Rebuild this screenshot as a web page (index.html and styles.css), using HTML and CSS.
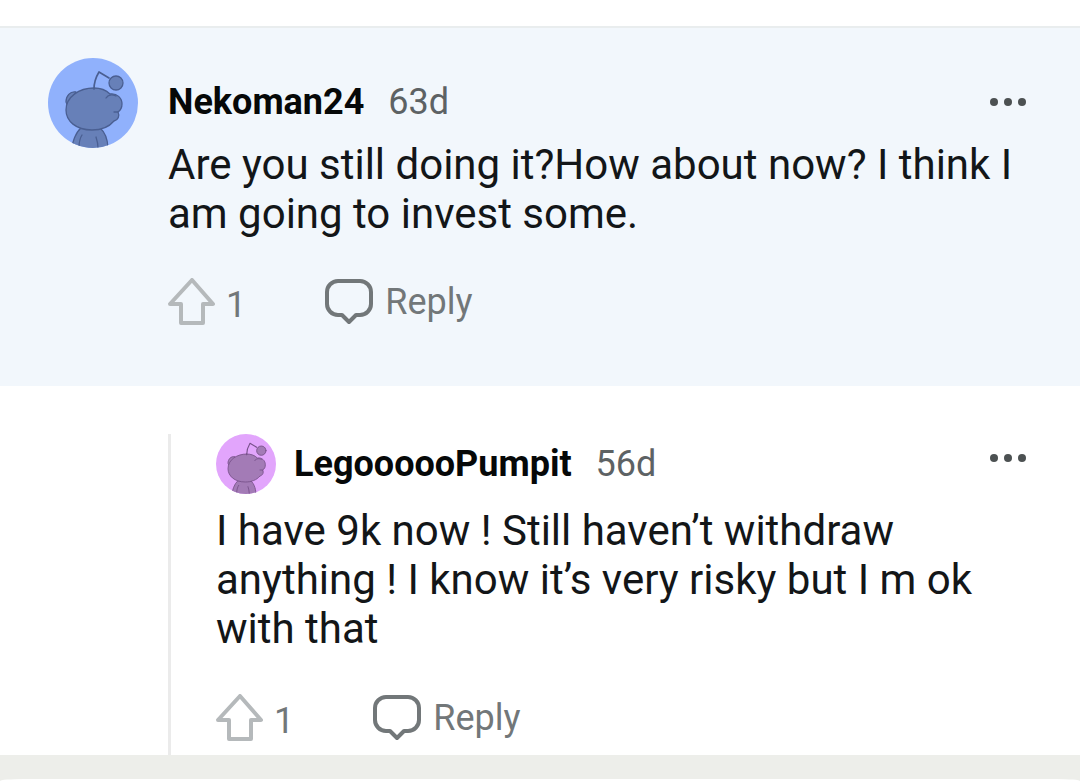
FILE: index.html
```html
<!DOCTYPE html>
<html lang="en">
<head>
<meta charset="utf-8">
<meta name="viewport" content="width=device-width, initial-scale=1">
<title>Comments</title>
<link rel="stylesheet" href="styles.css">
</head>
<body>
<svg class="defs" width="0" height="0" aria-hidden="true">
  <symbol id="snoo" viewBox="0 0 90 90">
    <g stroke-width="1.3" stroke-linejoin="round" stroke-linecap="round">
      <path d="M23 92C25 84 27 75 33 70H52C58 75 60 84 60 92Z"/>
      <path d="M31 90C31 84 32 80 34 77M50 90C50 86 49 82 48 79" fill="none"/>
      <path d="M28 34C22 33 18 38 18 44C19 46 19 47 20 48Z"/>
      <path d="M46 30C53 30 58 32 62 36C69 35 74 40 74 46C74 50 73 52 70 54C72 58 70 62 66 63C61 69 53 72 44 72C28 72 18 63 18 52C18 39 31 30 46 30Z"/>
      <path d="M58 40C60 37 64 36 68 38M66 54L70 54" fill="none"/>
      <path d="M46 31C46 25 48 19 51 14L61 20" fill="none" stroke-width="1.7"/>
      <circle cx="68" cy="25" r="7"/>
    </g>
  </symbol>
  <symbol id="upvote" viewBox="0 0 48 48">
    <path d="M24 2L45 26H35V45H13V26H2Z" fill="none" stroke="currentColor" stroke-width="4" stroke-linejoin="round"/>
  </symbol>
  <symbol id="bubble" viewBox="0 0 48 48">
    <path d="M13 3H35A11 11 0 0 1 46 14V26A11 11 0 0 1 35 37H31L24 44L17 37H13A11 11 0 0 1 2 26V14A11 11 0 0 1 13 3Z" fill="none" stroke="currentColor" stroke-width="4" stroke-linejoin="round"/>
  </symbol>
  <symbol id="dots" viewBox="0 0 40 10">
    <circle cx="6" cy="5" r="4"/><circle cx="20" cy="5" r="4"/><circle cx="34" cy="5" r="4"/>
  </symbol>
</svg>
<main class="thread">
  <article class="comment comment--highlight">
    <svg class="avatar avatar--blue" aria-hidden="true"><use href="#snoo"/></svg>
    <div class="content">
      <header class="meta">
        <a class="author" href="#nekoman24">Nekoman24</a>
        <span class="age">63d</span>
        <button class="more" type="button" aria-label="More options"><svg class="dots"><use href="#dots"/></svg></button>
      </header>
      <p class="text">Are you still doing it?How about now? I think I am going to invest some.</p>
      <footer class="actions">
        <button class="vote" type="button" aria-label="Upvote, 1"><svg class="icon"><use href="#upvote"/></svg><span class="count">1</span></button>
        <button class="reply" type="button"><svg class="icon"><use href="#bubble"/></svg>Reply</button>
      </footer>
    </div>
  </article>
  <article class="comment comment--nested">
    <div class="content">
      <header class="meta">
        <svg class="avatar avatar--small avatar--pink" aria-hidden="true"><use href="#snoo"/></svg>
        <a class="author" href="#legooooopumpit">LegoooooPumpit</a>
        <span class="age">56d</span>
        <button class="more" type="button" aria-label="More options"><svg class="dots"><use href="#dots"/></svg></button>
      </header>
      <p class="text">I have 9k now ! Still haven’t withdraw anything ! I know it’s very risky but I m ok with that</p>
      <footer class="actions">
        <button class="vote" type="button" aria-label="Upvote, 1"><svg class="icon"><use href="#upvote"/></svg><span class="count">1</span></button>
        <button class="reply" type="button"><svg class="icon"><use href="#bubble"/></svg>Reply</button>
      </footer>
    </div>
  </article>
</main>
<div class="next"></div>
</body>
</html>
```
FILE: styles.css
```css
* {
  box-sizing: border-box;
}

body {
  display: flex;
  flex-direction: column;
  min-height: 100vh;
  margin: 0;
  background: #edeeea;
  color: #131618;
  font-family: Roboto, "Liberation Sans", sans-serif;
}

.defs {
  position: absolute;
}

.thread {
  padding-top: 26px;
  background: #fff;
}

.comment--highlight {
  display: flex;
  gap: 30px;
  padding: 30px 48px 60px;
  border-top: 2px solid #e9edee;
  background: #f2f7fc;
}

.comment--nested {
  margin: 48px 48px 0 168px;
  padding: 0 0 13px 45px;
  border-left: 3px solid #ebebeb;
}

.content {
  flex: 1;
  min-width: 0;
}

.avatar {
  flex: none;
  width: 90px;
  height: 90px;
  border-radius: 50%;
}

.avatar--small {
  width: 60px;
  height: 60px;
  margin-right: 18px;
}

.avatar--blue {
  background: #90b1fc;
  fill: #6780b8;
  stroke: #4a5f92;
}

.avatar--pink {
  background: #e2a5fc;
  fill: #a37bb6;
  stroke: #77518a;
}

.meta {
  display: flex;
  align-items: center;
  font-size: 36px;
  line-height: 42px;
}

.comment--highlight .meta {
  padding: 23px 0 17px;
}

.comment--nested .meta {
  padding-bottom: 12px;
}

.author {
  color: #060808;
  font-weight: 700;
  text-decoration: none;
}

.age {
  margin-left: 24px;
  color: #5d6264;
}

button {
  display: flex;
  align-items: center;
  padding: 0;
  border: 0;
  background: none;
  font: inherit;
}

.more {
  margin-left: auto;
}

.comment--nested .more {
  padding-bottom: 12px;
}

.dots {
  width: 40px;
  height: 10px;
  margin-right: 4px;
  fill: #4c5152;
}

.text {
  margin: 0;
  font-size: 42px;
  line-height: 49px;
}

.actions {
  display: flex;
  gap: 79px;
  padding-top: 40px;
  font-size: 36px;
  line-height: 42px;
}

.comment--nested .actions {
  padding-top: 41px;
}

.icon {
  width: 48px;
  height: 48px;
}

.vote {
  gap: 10px;
  color: #b5b9bb;
}

.count {
  padding-top: 5px;
  color: #727779;
}

.reply {
  gap: 12px;
  color: #727779;
}

.next {
  flex: 1;
  padding-top: 24px;
}

.next::after {
  content: "";
  display: block;
  height: 2px;
  border-radius: 24px 24px 0 0 / 2px 2px 0 0;
  background: #fff;
}
```
